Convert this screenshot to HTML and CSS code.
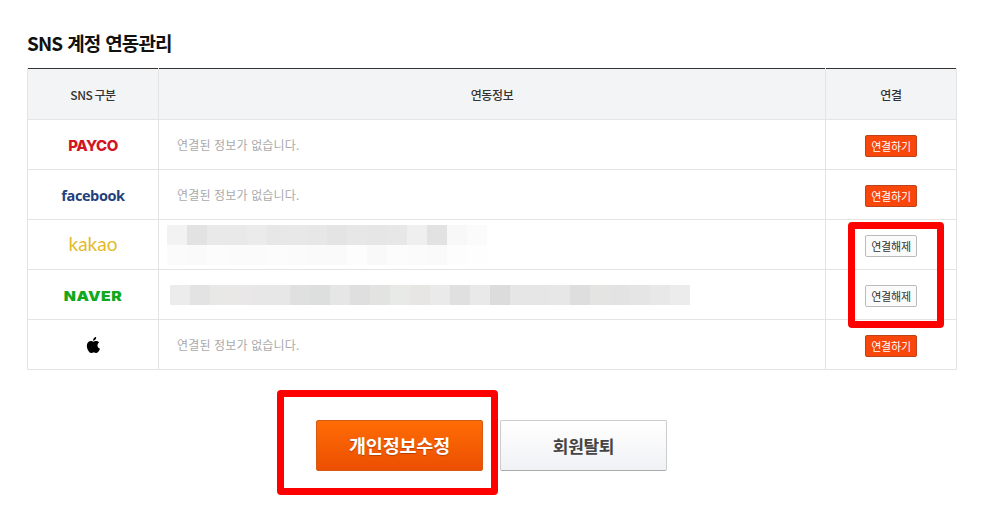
FILE: index.html
```html
<!DOCTYPE html>
<html lang="ko">
<head>
<meta charset="utf-8">
<title>SNS 계정 연동관리</title>
<link rel="stylesheet" href="styles.css">
</head>
<body>
<main class="page">
  <h2 class="title">SNS 계정 연동관리</h2>
  <table class="sns">
    <colgroup><col class="c1"><col class="c2"><col class="c3"></colgroup>
    <thead>
      <tr><th>SNS 구분</th><th>연동정보</th><th>연결</th></tr>
    </thead>
    <tbody>
      <tr>
        <td class="logo"><span class="payco">PAYCO</span></td>
        <td class="info">연결된 정보가 없습니다.</td>
        <td class="act"><button class="mini on">연결하기</button></td>
      </tr>
      <tr>
        <td class="logo"><span class="facebook">facebook</span></td>
        <td class="info">연결된 정보가 없습니다.</td>
        <td class="act"><button class="mini on">연결하기</button></td>
      </tr>
      <tr>
        <td class="logo"><span class="kakao">kakao</span></td>
        <td class="info blur">
          <svg class="mosaic m1" width="320" height="40" viewBox="0 0 320 40" shape-rendering="crispEdges" aria-hidden="true">
            <rect x="0" width="20" height="20" fill="#f2f2f2"/><rect x="20" width="20" height="20" fill="#e2e2e2"/><rect x="40" width="20" height="20" fill="#e9e9e9"/><rect x="60" width="20" height="20" fill="#e9e9e9"/><rect x="80" width="20" height="20" fill="#ebebeb"/><rect x="100" width="20" height="20" fill="#e7e7e7"/><rect x="120" width="20" height="20" fill="#e8e8e8"/><rect x="140" width="20" height="20" fill="#e7e7e7"/><rect x="160" width="20" height="20" fill="#e4e4e4"/><rect x="180" width="20" height="20" fill="#e7e7e7"/><rect x="200" width="20" height="20" fill="#e6e6e6"/><rect x="220" width="20" height="20" fill="#e7e7e7"/><rect x="240" width="20" height="20" fill="#efefef"/><rect x="260" width="20" height="20" fill="#e2e2e2"/><rect x="280" width="20" height="20" fill="#f8f8f8"/><rect x="300" width="20" height="20" fill="#fbfbfb"/>
            <rect x="0" y="20" width="20" height="20" fill="#fbfbfb"/><rect x="20" y="20" width="20" height="20" fill="#fafafa"/><rect x="40" y="20" width="20" height="20" fill="#fcfcfc"/><rect x="60" y="20" width="20" height="20" fill="#fbfbfb"/><rect x="80" y="20" width="20" height="20" fill="#fbfbfb"/><rect x="100" y="20" width="20" height="20" fill="#fcfcfc"/><rect x="120" y="20" width="20" height="20" fill="#fbfbfb"/><rect x="140" y="20" width="20" height="20" fill="#fafafa"/><rect x="160" y="20" width="20" height="20" fill="#fafafa"/><rect x="180" y="20" width="20" height="20" fill="#fdfdfd"/><rect x="200" y="20" width="20" height="20" fill="#f9f9f9"/><rect x="220" y="20" width="20" height="20" fill="#fcfcfc"/><rect x="240" y="20" width="20" height="20" fill="#fbfbfb"/><rect x="260" y="20" width="20" height="20" fill="#fafafa"/><rect x="280" y="20" width="20" height="20" fill="#fdfdfd"/><rect x="300" y="20" width="20" height="20" fill="#fefefe"/>
          </svg>
        </td>
        <td class="act"><button class="mini off">연결해제</button></td>
      </tr>
      <tr>
        <td class="logo"><span class="naver">NAVER</span></td>
        <td class="info blur">
          <svg class="mosaic m2" width="520" height="20" viewBox="0 0 520 20" shape-rendering="crispEdges" aria-hidden="true">
            <rect x="0" width="20" height="20" fill="#ececec"/><rect x="20" width="20" height="20" fill="#e3e3e3"/><rect x="40" width="20" height="20" fill="#e8e8e6"/><rect x="60" width="20" height="20" fill="#e9e7e7"/><rect x="80" width="20" height="20" fill="#e7e7e7"/><rect x="100" width="20" height="20" fill="#e7e7e7"/><rect x="120" width="20" height="20" fill="#e0e0e0"/><rect x="140" width="20" height="20" fill="#dcdfde"/><rect x="160" width="20" height="20" fill="#e6e6e6"/><rect x="180" width="20" height="20" fill="#dfdfdf"/><rect x="200" width="20" height="20" fill="#e3e3e1"/><rect x="220" width="20" height="20" fill="#e8eae8"/><rect x="240" width="20" height="20" fill="#e7e6e3"/><rect x="260" width="20" height="20" fill="#eaeaea"/><rect x="280" width="20" height="20" fill="#e0e0e0"/><rect x="300" width="20" height="20" fill="#e9e9e9"/><rect x="320" width="20" height="20" fill="#dcdcdc"/><rect x="340" width="20" height="20" fill="#e6e6e6"/><rect x="360" width="20" height="20" fill="#e6e6e6"/><rect x="380" width="20" height="20" fill="#e7e7e7"/><rect x="400" width="20" height="20" fill="#dedede"/><rect x="420" width="20" height="20" fill="#e4e4e2"/><rect x="440" width="20" height="20" fill="#e3e3e3"/><rect x="460" width="20" height="20" fill="#e5e5e5"/><rect x="480" width="20" height="20" fill="#e8e8e8"/><rect x="500" width="20" height="20" fill="#ececec"/>
          </svg>
        </td>
        <td class="act"><button class="mini off">연결해제</button></td>
      </tr>
      <tr>
        <td class="logo">
          <svg class="apple" width="15" height="18" viewBox="0 0 17 20" aria-hidden="true">
            <path fill="#000" d="M14.1 10.6c0-2.2 1.8-3.2 1.9-3.3-1-1.5-2.6-1.7-3.2-1.7-1.4-.1-2.6.8-3.3.8-.7 0-1.8-.8-2.9-.8-1.5 0-2.9.9-3.7 2.2-1.6 2.7-.4 6.8 1.1 9 .8 1.1 1.7 2.3 2.9 2.3 1.1 0 1.6-.7 3-.7s1.8.7 3 .7c1.2 0 2-1.1 2.8-2.2.9-1.3 1.2-2.5 1.3-2.6-.1 0-2.9-1.1-2.9-3.7zM11.8 3.9c.6-.8 1-1.8.9-2.9-.9 0-2 .6-2.6 1.3-.6.7-1.1 1.7-1 2.8 1 .1 2-.5 2.7-1.2z"/>
          </svg>
        </td>
        <td class="info">연결된 정보가 없습니다.</td>
        <td class="act"><button class="mini on">연결하기</button></td>
      </tr>
    </tbody>
  </table>
  <div class="actions">
    <button class="big primary">개인정보수정</button>
    <button class="big plain">회원탈퇴</button>
  </div>
  <div class="mark mark-a"></div>
  <div class="mark mark-b"></div>
</main>
</body>
</html>
```

FILE: styles.css
```css
* { box-sizing: border-box; }
html, body { margin: 0; background: #fff; }
body {
  font-family: "Noto Sans CJK KR", "Noto Sans", sans-serif;
  color: #333;
  height: 506px;
  overflow: hidden;
}
.page {
  position: relative;
  width: 989px;
  height: 506px;
  padding: 29px 32px 0 27px;
}
.title {
  margin: 0 0 12px;
  height: 27px;
  line-height: 27px;
  font-size: 19px;
  font-weight: 700;
  letter-spacing: -0.9px;
  word-spacing: 0.5px;
  color: #111;
}
.sns {
  width: 930px;
  table-layout: fixed;
  border-collapse: collapse;
  border-top: 1px solid #333;
}
.c1 { width: 131px; }
.c3 { width: 131px; }
.sns th, .sns td {
  border: 1px solid #e4e4e4;
  padding: 0;
  height: 50px;
}
.sns thead th {
  border-top: 0;
  height: 51px;
  background: #f3f4f6;
  font-size: 12px;
  font-weight: 500;
  letter-spacing: -0.4px;
  word-spacing: -1px;
  color: #333;
  text-align: center;
}
.logo { text-align: center; line-height: 1; vertical-align: middle; }
.info {
  padding-left: 18px !important;
  font-size: 12px;
  color: #aaa;
  letter-spacing: 0.15px;
}
.info.blur { padding-left: 0 !important; }
.mosaic { display: block; }
.m1 { margin-left: 8px; }
.m2 { margin-left: 11px; }
.act { text-align: center; }
.payco {
  display: inline-block;
  padding-top: 2px;
  font-family: "Inter", sans-serif;
  font-size: 15px;
  font-weight: 800;
  letter-spacing: -0.5px;
  color: #d2161f;
}
.facebook {
  font-family: "Open Sans", sans-serif;
  font-size: 14.5px;
  font-weight: 700;
  letter-spacing: -0.4px;
  color: #1f3f7d;
}
.kakao {
  display: inline-block;
  padding-bottom: 2px;
  font-family: "Lato", sans-serif;
  font-size: 19px;
  font-weight: 400;
  letter-spacing: 0;
  color: #e3bb2a;
}
.naver {
  display: inline-block;
  font-family: "Inter", sans-serif;
  font-size: 13.5px;
  font-weight: 900;
  letter-spacing: 0.4px;
  color: #12a81c;
  transform: scaleX(1.17);
}
.apple { display: inline-block; vertical-align: middle; margin-right: 2px; }
.mini {
  display: inline-block;
  width: 52px;
  height: 22px;
  padding: 0;
  border-radius: 2px;
  font-family: inherit;
  font-size: 11px;
  line-height: 20px;
  letter-spacing: -0.2px;
  vertical-align: middle;
}
.mini.on { background: #f9460a; border: 1px solid #b9431a; color: #fff; }
.mini.off { background: #fbfbfb; border: 1px solid #bbb; color: #333; }
.actions {
  display: flex;
  gap: 17px;
  justify-content: flex-start;
  margin: 50px 0 0 289px;
}
.big {
  width: 167px;
  height: 51px;
  padding: 0;
  border-radius: 2px;
  font-family: inherit;
  font-size: 17px;
  font-weight: 700;
  letter-spacing: -0.3px;
}
.primary {
  padding-bottom: 2px;
  font-size: 18.5px;
  letter-spacing: -0.2px;
  background: linear-gradient(#ff6c05, #ec4f02);
  border: 1px solid #d65a14;
  color: #fff;
  text-shadow: 0 1px 1px rgba(120, 40, 0, .5);
}
.plain {
  background: linear-gradient(#fff, #f0f1f4);
  border: 1px solid #ccc;
  border-bottom-color: #aaa;
  color: #444;
}
.mark {
  position: absolute;
  border: 7px solid #ff0000;
  border-radius: 4px;
}
.mark-a { left: 848px; top: 222px; width: 96px; height: 106px; }
.mark-b { left: 277px; top: 390px; width: 221px; height: 105px; }
```
